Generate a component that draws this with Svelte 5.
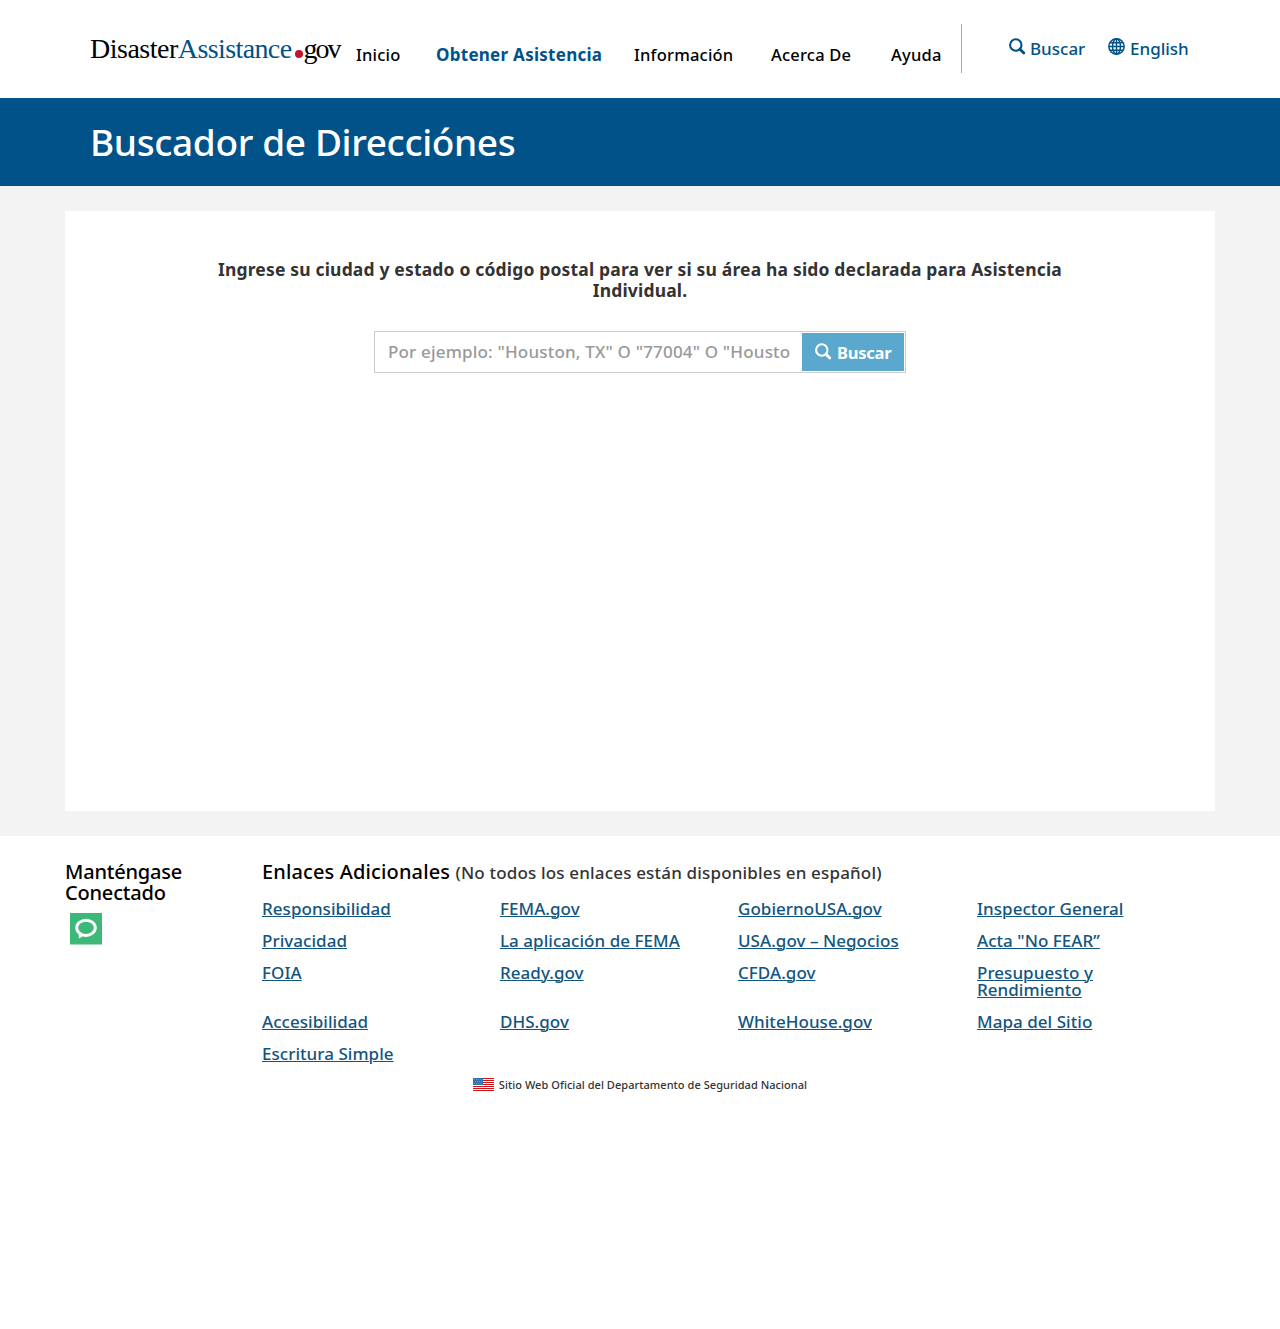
<script>
  const nav = [
    { label: 'Inicio' },
    { label: 'Obtener Asistencia', active: true },
    { label: 'Información' },
    { label: 'Acerca De' },
    { label: 'Ayuda' },
  ];

  const links = [
    'Responsibilidad', 'FEMA.gov', 'GobiernoUSA.gov', 'Inspector General',
    'Privacidad', 'La aplicación de FEMA', 'USA.gov – Negocios', 'Acta "No FEAR”',
    'FOIA', 'Ready.gov', 'CFDA.gov', 'Presupuesto y Rendimiento',
    'Accesibilidad', 'DHS.gov', 'WhiteHouse.gov', 'Mapa del Sitio',
    'Escritura Simple',
  ];
</script>

{#snippet magnifier()}
  <svg class="icon" viewBox="0 0 17 17" aria-hidden="true">
    <circle cx="6.8" cy="7" r="5.7" fill="none" stroke="currentColor" stroke-width="2.1" />
    <path d="M11 11.2 L14.8 15" stroke="currentColor" stroke-width="2.8" stroke-linecap="round" />
  </svg>
{/snippet}

<header>
  <a class="logo" href="#top">Disaster<span class="assist">Assistance</span><i class="dot"></i><span class="gov">gov</span></a>
  <nav>
    {#each nav as item}
      <a href="#top" class:active={item.active}>{item.label}</a>
    {/each}
  </nav>
  <div class="tools">
    <a href="#top">{@render magnifier()}<span>Buscar</span></a>
    <a href="#top">
      <svg class="icon globe" viewBox="0 0 18 18" fill="none" stroke="currentColor" stroke-width="1.6" aria-hidden="true">
        <circle cx="9" cy="9" r="8.1" />
        <ellipse cx="9" cy="9" rx="4.2" ry="8.1" />
        <path d="M9 1V17M1 9H17M2.3 5H15.7M2.3 13H15.7" />
      </svg><span>English</span>
    </a>
  </div>
</header>

<div class="banner"><h1>Buscador de Direcciónes</h1></div>

<main>
  <section class="panel">
    <h2>Ingrese su ciudad y estado o código postal para ver si su área ha sido declarada para Asistencia Individual.</h2>
    <form class="search">
      <div class="field">Por ejemplo: "Houston, TX" O "77004" O "Housto</div>
      <button type="button">{@render magnifier()}<span>Buscar</span></button>
    </form>
  </section>
</main>

<footer>
  <div class="columns">
    <div class="connect">
      <h3>Manténgase Conectado</h3>
      <svg class="bubble" viewBox="0 0 32 32" aria-hidden="true">
        <rect width="32" height="31.5" fill="#3cb878" />
        <path d="M8.5 18 L9 25.5 L15 22 Z" fill="#fff" />
        <ellipse cx="16" cy="14.8" rx="9.3" ry="7.6" fill="#3cb878" stroke="#fff" stroke-width="3" />
      </svg>
    </div>
    <div class="extra">
      <h3>Enlaces Adicionales <small>(No todos los enlaces están disponibles en español)</small></h3>
      <ul>
        {#each links as link}
          <li><a href="#top">{link}</a></li>
        {/each}
      </ul>
    </div>
  </div>
  <p class="official">
    <svg class="flag" viewBox="0 0 21 13" shape-rendering="crispEdges" aria-hidden="true">
      <rect width="21" height="13" fill="#fff" />
      <path d="M0 .5H21M0 2.5H21M0 4.5H21M0 6.5H21M0 8.5H21M0 10.5H21M0 12.5H21" stroke="#cc1517" />
      <rect width="10" height="7" fill="#3474ae" />
      <path d="M1 1.5H9M2 3.5H10M1 5.5H9" stroke="#5b91bd" stroke-dasharray="1 1" />
    </svg>
    <span>Sitio Web Oficial del Departamento de Seguridad Nacional</span>
  </p>
</footer>

<style>
  :global(body) {
    background: #fff;
    color: #333;
    font-family: 'Noto Sans', 'Open Sans', sans-serif;
    font-size: 17px;
    font-weight: 500;
    line-height: 17px;
  }
  a { color: inherit; text-decoration: none; }
  h1, h2, h3, p, ul { margin: 0; padding: 0; font-weight: 500; }

  header {
    display: flex;
    height: 98px;
    padding-left: 90px;
    box-sizing: border-box;
    white-space: nowrap;
  }
  .logo {
    width: 266px;
    padding-top: 34px;
    color: #000;
    font: 400 28px/30px 'Liberation Serif', serif;
    letter-spacing: -0.5px;
  }
  .assist { color: #005288; letter-spacing: -0.6px; }
  .gov { letter-spacing: -2px; }
  .dot {
    display: inline-block;
    width: 8px;
    height: 8px;
    margin: 0 1px 0 3px;
    border-radius: 50%;
    background: #c41230;
  }
  nav {
    display: grid;
    grid-template-columns: 80px 198px 137px 120px 70px;
    height: 49px;
    margin-top: 24px;
    padding-top: 22px;
    box-sizing: border-box;
    border-right: 1px solid #aaa;
    color: #000;
    font-size: 16.5px;
    letter-spacing: 0.2px;
  }
  .active { color: #005288; font-size: 17px; font-weight: 700; letter-spacing: 0.27px; }
  .tools {
    display: grid;
    grid-template-columns: 99px 90px;
    height: 20px;
    margin: 38px 0 0 47px;
    color: #005288;
  }
  .tools a, button { display: flex; gap: 4px; }
  .tools a:last-child { gap: 5px; }
  .tools span { padding-top: 2px; }
  .icon { width: 17px; height: 17px; flex: none; }

  .banner {
    height: 88px;
    padding-left: 90px;
    background: #005288;
    color: #fff;
  }
  h1 { font-size: 37px; line-height: 87px; letter-spacing: -0.37px; }

  main { padding: 25px 65px; background: #f3f3f3; }
  .panel { height: 600px; box-sizing: border-box; padding-top: 48px; background: #fff; }
  h2 {
    width: 860px;
    margin: 0 auto;
    text-align: center;
    font-size: 17.5px;
    font-weight: 700;
    line-height: 21px;
    letter-spacing: 0.17px;
  }
  .search {
    display: flex;
    width: 532px;
    height: 42px;
    margin: 30px auto 0;
    padding: 1px;
    box-sizing: border-box;
    border: 1px solid #ccc;
  }
  .field {
    width: 426px;
    box-sizing: border-box;
    padding-left: 12px;
    overflow: hidden;
    color: #999;
    line-height: 38px;
    letter-spacing: 0.18px;
    white-space: nowrap;
  }
  button {
    width: 102px;
    padding: 0 0 0 13px;
    align-items: center;
    border: 0;
    background: #5ba8ce;
    color: #fff;
    font: inherit;
    font-size: 16.5px;
    font-weight: 700;
    letter-spacing: -0.25px;
  }
  button .icon { margin: -2px 1px 0 0; }

  footer { padding: 25px 65px 0; }
  .columns { display: flex; }
  .connect { width: 197px; }
  h3 { color: #000; font-size: 20px; line-height: 21px; letter-spacing: 0.13px; }
  .connect h3 { width: 130px; letter-spacing: -0.2px; }
  .bubble { display: block; width: 32px; height: 32px; margin: 10px 0 0 5px; }
  small { color: #333; font-size: 17px; letter-spacing: 0.17px; }
  ul {
    display: grid;
    grid-template-columns: 238px 238px 239px 150px;
    row-gap: 15px;
    margin-top: 17px;
    list-style: none;
    color: #12557f;
    letter-spacing: 0.04px;
  }
  li a { text-decoration: underline; text-underline-offset: 1px; text-decoration-thickness: 1px; }
  .official {
    display: flex;
    justify-content: center;
    align-items: center;
    gap: 5px;
    margin-top: 14px;
    font-size: 11px;
    letter-spacing: 0.05px;
  }
  .flag { width: 21px; height: 13px; }
</style>
